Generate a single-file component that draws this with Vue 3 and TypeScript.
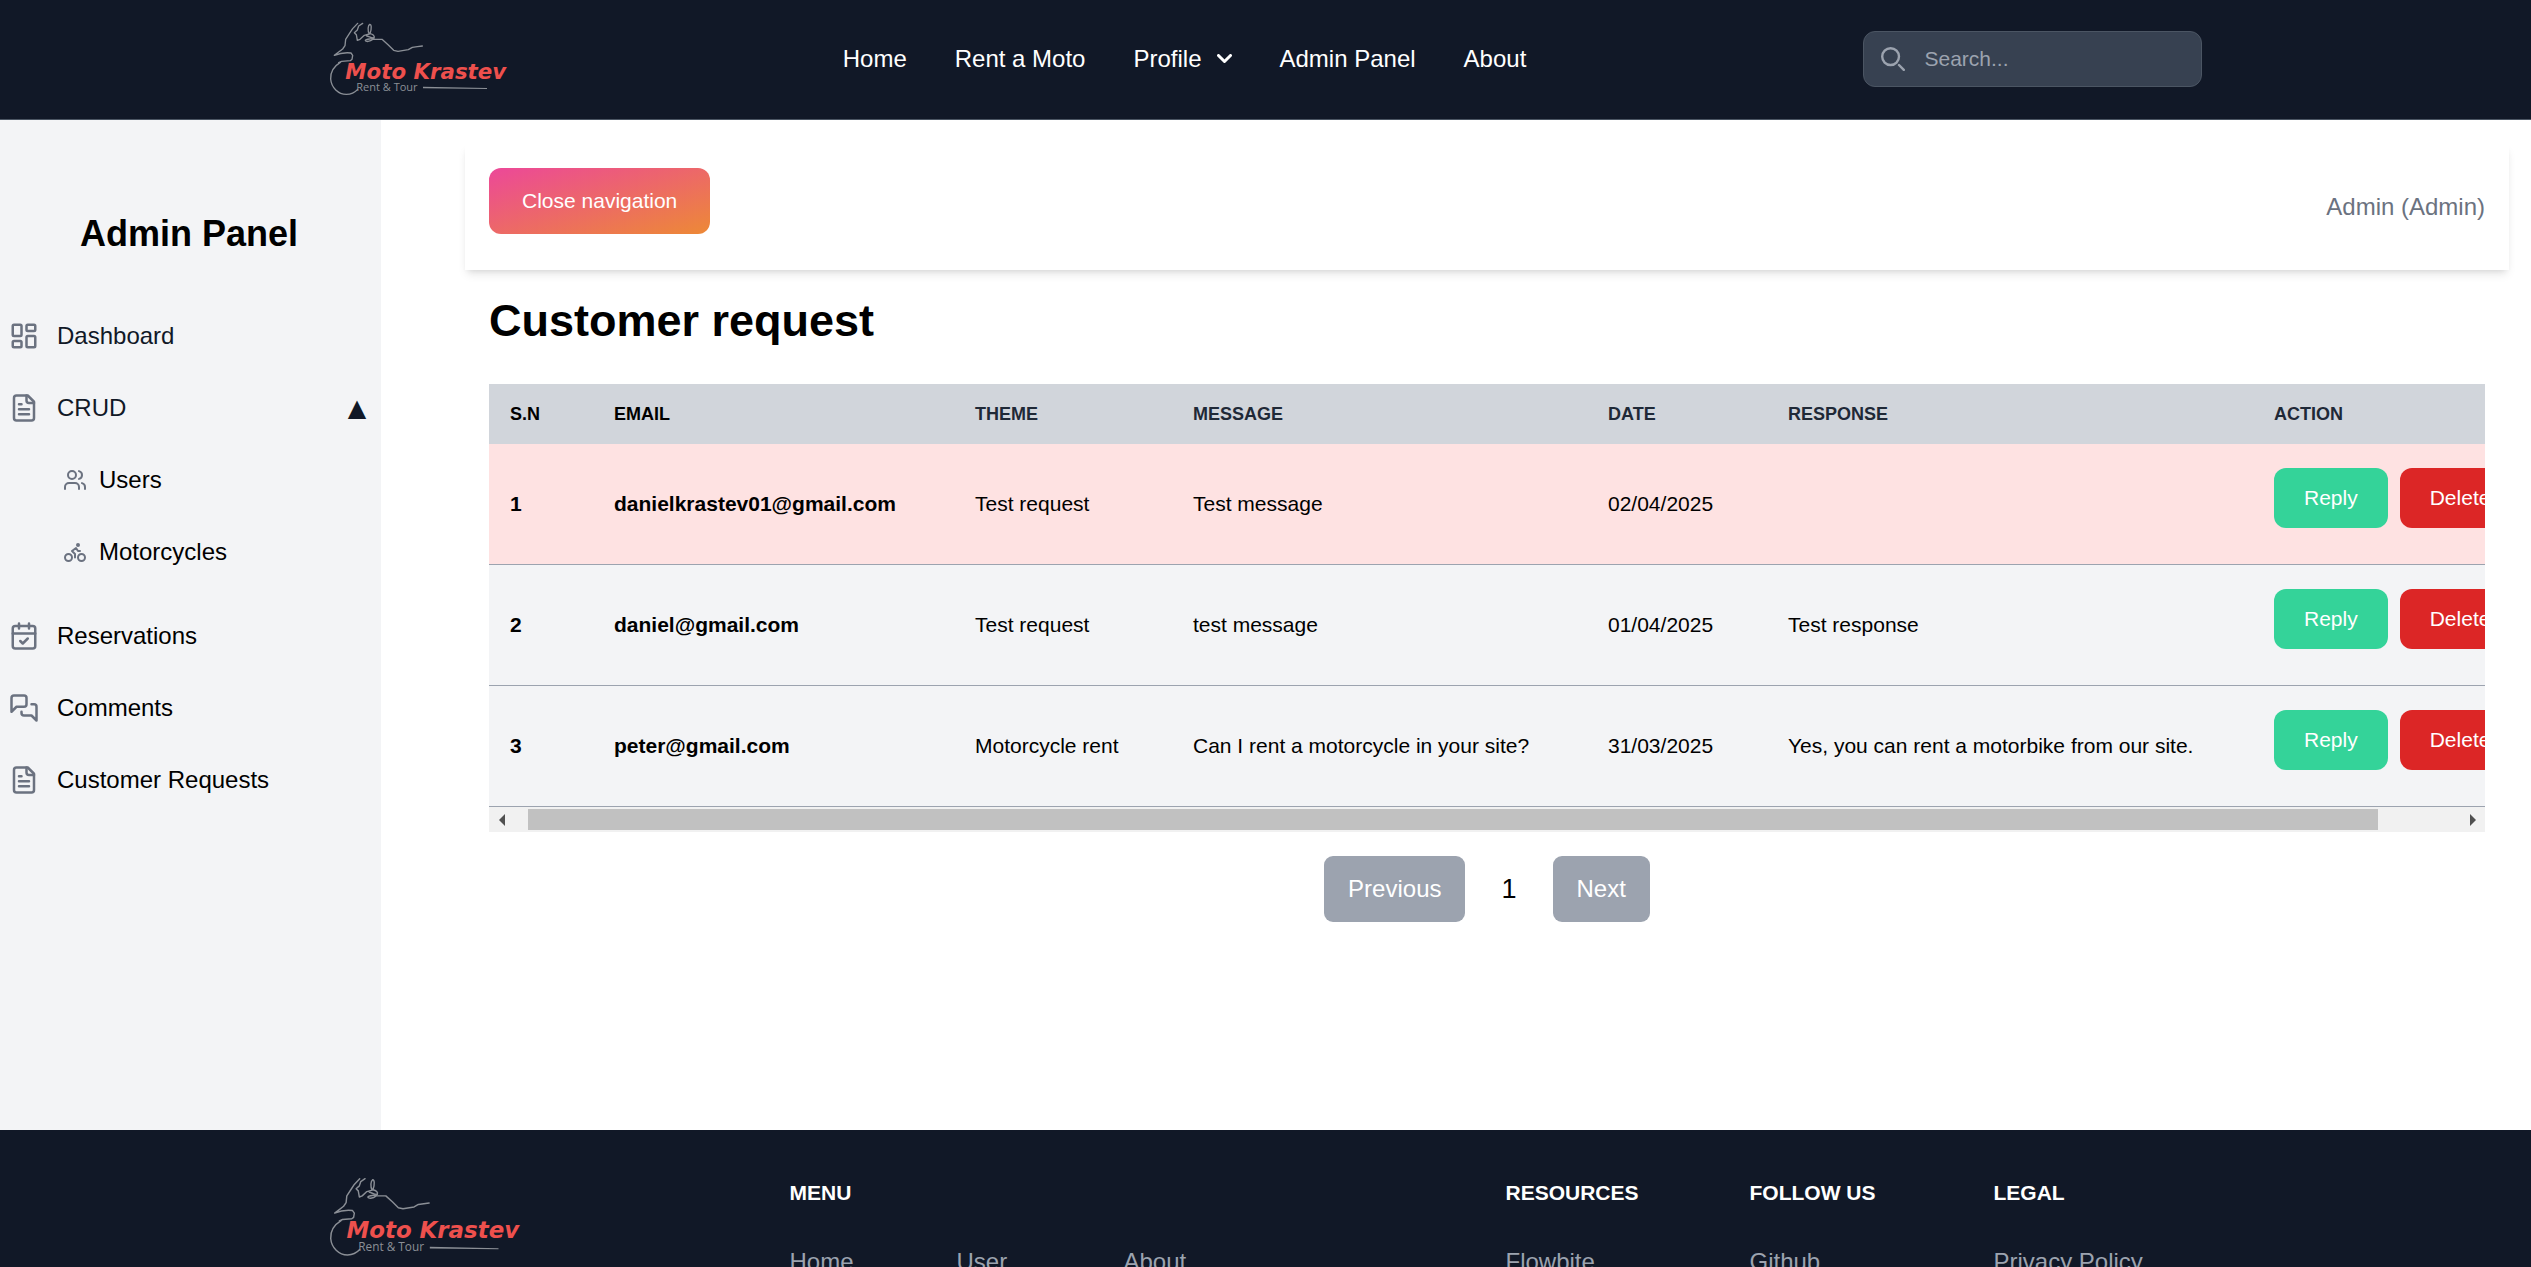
<script setup lang="ts">
import { onMounted, ref } from 'vue'

interface CustomerRequest {
  id: number
  email: string
  theme: string
  message: string
  date: string
  response: string
}

interface LinkGroup {
  title: string
  links: string[]
}

const requests: CustomerRequest[] = [
  { id: 1, email: 'danielkrastev01@gmail.com', theme: 'Test request', message: 'Test message', date: '02/04/2025', response: '' },
  { id: 2, email: 'daniel@gmail.com', theme: 'Test request', message: 'test message', date: '01/04/2025', response: 'Test response' },
  { id: 3, email: 'peter@gmail.com', theme: 'Motorcycle rent', message: 'Can I rent a motorcycle in your site?', date: '31/03/2025', response: 'Yes, you can rent a motorbike from our site.' },
]

const columns = ['S.N', 'Email', 'Theme', 'Message', 'Date', 'Response', 'Action']

const linkGroups: LinkGroup[] = [
  { title: 'Menu', links: ['Home', 'User', 'About'] },
  { title: 'Resources', links: ['Flowbite'] },
  { title: 'Follow us', links: ['Github'] },
  { title: 'Legal', links: ['Privacy Policy'] },
]

const search = ref('')
const crudOpen = ref(true)

// Horizontal scrolling of the table with its own scroll bar.
const STEP = 15
const scroller = ref<HTMLDivElement | null>(null)
const thumbLeft = ref(0)
const thumbWidth = ref(100)

function syncThumb(): void {
  const el = scroller.value
  if (!el) return
  thumbLeft.value = (el.scrollLeft / el.scrollWidth) * 100
  thumbWidth.value = (el.clientWidth / el.scrollWidth) * 100
}

function scrollTable(delta: number): void {
  if (!scroller.value) return
  scroller.value.scrollLeft += delta
  syncThumb()
}

onMounted(() => scrollTable(STEP))
</script>

<template>
  <div class="page">
    <svg class="defs" aria-hidden="true">
      <defs>
        <g id="brand-art">
          <g fill="none" stroke="#8b8f96" stroke-width="4" stroke-linejoin="round" stroke-linecap="round">
            <path d="M170 70L155 86L147 98L134 118L132 137L125 147L112 157L100 166Q125 156 150 159L155 166L153 178L148 182L122 184L113 188" />
            <path d="M118 187C98 199 88 216 89 237C91 263 112 283 136 283C149 283 162 277 170 268" />
            <path d="M185 70L173 78L169 90L160 98L166 104L169 121L177 118L190 106L205 102C199 92 201 76 206 73C211 72 213 84 207 101C216 103 222 108 219 114C210 115 203 108 197 108" />
            <path d="M219 114C210 118 195 116 193 121C193 126 207 126 216 118L243 118L262 135L278 151L291 154L322 149L334 142L349 140L364 138" />
          </g>
          <path d="M366 260L558 264L558 267L366 265Z" fill="#8b8f96" />
        </g>
      </defs>
    </svg>

    <header class="topbar">
      <div class="container topbar-inner">
        <a href="#" aria-label="Moto Krastev">
          <svg class="logo" viewBox="87 69 531 216">
            <use href="#brand-art" />
            <text x="133" y="237" class="brand-name">Moto Krastev</text>
            <text x="166" y="273" class="brand-sub">Rent &amp; Tour</text>
          </svg>
        </a>
        <nav class="main-nav">
          <a href="#">Home</a>
          <a href="#">Rent a Moto</a>
          <button type="button">
            Profile
            <svg class="chevron" viewBox="0 0 10 6" fill="none" stroke="currentColor" stroke-width="2" stroke-linecap="round" stroke-linejoin="round"><path d="m1 1 4 4 4-4" /></svg>
          </button>
          <a href="#">Admin Panel</a>
          <a href="#">About</a>
        </nav>
        <label class="search">
          <svg viewBox="0 0 20 20" fill="none" stroke="currentColor" stroke-width="2" stroke-linecap="round"><path d="m19 19-4-4m0-7A7 7 0 1 1 1 8a7 7 0 0 1 14 0Z" /></svg>
          <input v-model="search" type="text" placeholder="Search..." aria-label="Search" />
        </label>
      </div>
    </header>

    <div class="body">
      <aside class="sidebar">
        <h2>Admin Panel</h2>
        <ul>
          <li>
            <a href="#" class="item dark">
              <svg class="icon" viewBox="0 0 24 24"><rect x="3" y="3" width="7" height="9" rx="1" /><rect x="14" y="3" width="7" height="5" rx="1" /><rect x="14" y="12" width="7" height="9" rx="1" /><rect x="3" y="16" width="7" height="5" rx="1" /></svg>
              Dashboard
            </a>
          </li>
          <li>
            <button type="button" class="item dark" :aria-expanded="crudOpen" @click="crudOpen = !crudOpen">
              <svg class="icon" viewBox="0 0 24 24"><path d="M15 2H6a2 2 0 0 0-2 2v16a2 2 0 0 0 2 2h12a2 2 0 0 0 2-2V7Z" /><path d="M14 2v4a2 2 0 0 0 2 2h4M10 9H8M16 13H8M16 17H8" /></svg>
              CRUD
              <span class="caret">{{ crudOpen ? '▲' : '▼' }}</span>
            </button>
            <ul v-if="crudOpen" class="sub">
              <li>
                <a href="#" class="item">
                  <svg class="icon" viewBox="0 0 24 24"><path d="M16 21v-2a4 4 0 0 0-4-4H6a4 4 0 0 0-4 4v2" /><circle cx="9" cy="7" r="4" /><path d="M22 21v-2a4 4 0 0 0-3-3.87M16 3.13a4 4 0 0 1 0 7.75" /></svg>
                  Users
                </a>
              </li>
              <li>
                <a href="#" class="item">
                  <svg class="icon" viewBox="0 0 24 24"><circle cx="18.5" cy="17.5" r="3.5" /><circle cx="5.5" cy="17.5" r="3.5" /><circle cx="15" cy="5" r="1" /><path d="M12 17.5V14l-3-3 4-3 2 3h2" /></svg>
                  Motorcycles
                </a>
              </li>
            </ul>
          </li>
          <li>
            <a href="#" class="item">
              <svg class="icon" viewBox="0 0 24 24"><path d="M8 2v4M16 2v4" /><rect x="3" y="4" width="18" height="18" rx="2" /><path d="M3 10h18M9 16l2 2 4-4" /></svg>
              Reservations
            </a>
          </li>
          <li>
            <a href="#" class="item">
              <svg class="icon" viewBox="0 0 24 24"><path d="M14 9a2 2 0 0 1-2 2H6l-4 4V4a2 2 0 0 1 2-2h8a2 2 0 0 1 2 2z" /><path d="M18 9h2a2 2 0 0 1 2 2v11l-4-4h-6a2 2 0 0 1-2-2v-1" /></svg>
              Comments
            </a>
          </li>
          <li>
            <a href="#" class="item">
              <svg class="icon" viewBox="0 0 24 24"><path d="M15 2H6a2 2 0 0 0-2 2v16a2 2 0 0 0 2 2h12a2 2 0 0 0 2-2V7Z" /><path d="M14 2v4a2 2 0 0 0 2 2h4M10 9H8M16 13H8M16 17H8" /></svg>
              Customer Requests
            </a>
          </li>
        </ul>
      </aside>

      <main class="content">
        <div class="toolbar">
          <button type="button" class="close-nav">Close navigation</button>
          <span class="who">Admin (Admin)</span>
        </div>

        <section class="panel">
          <h1>Customer request</h1>
          <div ref="scroller" class="scroller" @scroll="syncThumb">
            <table>
              <colgroup>
                <col class="c-sn" /><col class="c-email" /><col class="c-theme" /><col class="c-message" /><col class="c-date" /><col class="c-response" /><col class="c-action" />
              </colgroup>
              <thead>
                <tr><th v-for="column in columns" :key="column" scope="col">{{ column }}</th></tr>
              </thead>
              <tbody>
                <tr v-for="request in requests" :key="request.id" :class="{ pending: !request.response }">
                  <th scope="row">{{ request.id }}</th>
                  <td class="strong">{{ request.email }}</td>
                  <td>{{ request.theme }}</td>
                  <td>{{ request.message }}</td>
                  <td>{{ request.date }}</td>
                  <td>{{ request.response }}</td>
                  <td>
                    <div class="actions">
                      <button type="button" class="reply">Reply</button>
                      <button type="button" class="delete">Delete</button>
                    </div>
                  </td>
                </tr>
              </tbody>
            </table>
          </div>
          <div class="scrollbar">
            <button type="button" aria-label="Scroll left" @click="scrollTable(-STEP)"><svg viewBox="0 0 6 12"><path d="M6 0v12L0 6z" /></svg></button>
            <div class="track"><div class="thumb" :style="{ marginLeft: thumbLeft + '%', width: thumbWidth + '%' }"></div></div>
            <button type="button" aria-label="Scroll right" @click="scrollTable(STEP)"><svg viewBox="0 0 6 12"><path d="M0 0v12l6-6z" /></svg></button>
          </div>

          <div class="pagination">
            <button type="button">Previous</button>
            <span>1</span>
            <button type="button">Next</button>
          </div>
        </section>
      </main>
    </div>

    <footer class="footer">
      <div class="container footer-inner">
        <a href="#" aria-label="Moto Krastev">
          <svg class="logo large" viewBox="87 69 531 216">
            <use href="#brand-art" />
            <text x="133" y="237" class="brand-name">Moto Krastev</text>
            <text x="166" y="273" class="brand-sub">Rent &amp; Tour</text>
          </svg>
        </a>
        <div class="groups">
          <div v-for="group in linkGroups" :key="group.title">
            <h2>{{ group.title }}</h2>
            <ul>
              <li v-for="link in group.links" :key="link"><a href="#">{{ link }}</a></li>
            </ul>
          </div>
        </div>
      </div>
    </footer>
  </div>
</template>

<style>
body {
  margin: 0;
}
</style>

<style scoped>
.page {
  height: 100vh;
  overflow: hidden;
  background: #fff;
  color: #000;
  font-family: "Liberation Sans", Arial, sans-serif;
  font-size: 24px;
  line-height: 36px;
}
.page * {
  box-sizing: border-box;
}
h1, h2, ul {
  margin: 0;
  padding: 0;
}
ul {
  list-style: none;
}
a {
  color: inherit;
  text-decoration: none;
}
button {
  margin: 0;
  padding: 0;
  border: 0;
  background: none;
  color: inherit;
  font: inherit;
  cursor: pointer;
}
.defs {
  position: absolute;
  width: 0;
  height: 0;
}
.brand-name {
  fill: #ee504d;
  font: italic 700 64px "DejaVu Sans", sans-serif;
}
.brand-sub {
  fill: #8b8f96;
  font: 400 33px "Open Sans", sans-serif;
}
.container {
  max-width: 1920px;
  margin: 0 auto;
  padding: 0 24px;
}

.topbar {
  border-bottom: 1px solid #4b5563;
  background: #111827;
  color: #fff;
}
.topbar-inner {
  display: flex;
  align-items: center;
  justify-content: space-between;
  min-height: 119px;
  padding-bottom: 2px;
}
.logo {
  display: block;
  overflow: visible;
  width: 177px;
  height: 72px;
}
.logo.large {
  width: 190px;
  height: 78px;
}
.main-nav {
  display: flex;
  align-items: center;
  gap: 48px;
}
.main-nav button {
  display: flex;
  align-items: center;
  gap: 15px;
}
.chevron {
  width: 15px;
  height: 9px;
}
.search {
  display: flex;
  align-items: center;
  gap: 20px;
  width: 339px;
  height: 56px;
  padding: 0 17px;
  border: 1px solid #4b5563;
  border-radius: 12px;
  background: #374151;
  color: #9ca3af;
}
.search svg {
  flex: none;
  width: 24px;
  height: 24px;
}
.search input {
  width: 100%;
  min-width: 0;
  padding: 0;
  border: 0;
  outline: 0;
  background: none;
  color: #fff;
  font: inherit;
  font-size: 21px;
}
.search input::placeholder {
  color: #9ca3af;
  opacity: 1;
}

.body {
  display: flex;
  min-height: 1010px;
}
.sidebar {
  flex: none;
  width: 381px;
  padding: 87px 3px 0 0;
  background: #f3f4f6;
}
.sidebar h2 {
  margin-bottom: 45px;
  font-size: 36px;
  line-height: 54px;
  text-align: center;
}
.sidebar ul {
  display: flex;
  flex-direction: column;
  gap: 12px;
}
.item {
  display: flex;
  align-items: center;
  gap: 18px;
  width: 100%;
  height: 60px;
  padding: 0 9px;
}
.dark {
  color: #111827;
}
.icon {
  flex: none;
  width: 30px;
  height: 30px;
  fill: none;
  stroke: #6b7280;
  stroke-width: 2;
  stroke-linecap: round;
  stroke-linejoin: round;
}
.caret {
  width: 24px;
  margin-left: auto;
  font-family: "DejaVu Sans", sans-serif;
  text-align: center;
}
.sidebar .sub {
  padding: 12px 0;
}
.sub .item {
  gap: 12px;
  padding-left: 63px;
}
.sub .icon {
  width: 24px;
  height: 24px;
}

.content {
  flex: 1;
  min-width: 0;
  padding: 24px 22px 0 84px;
}
.toolbar {
  display: flex;
  align-items: center;
  justify-content: space-between;
  padding: 24px;
  box-shadow: 0 6px 9px -2px rgba(0, 0, 0, 0.1), 0 3px 6px -3px rgba(0, 0, 0, 0.1);
}
.close-nav {
  margin-bottom: 12px;
  padding: 18px 33px;
  border-radius: 12px;
  background: linear-gradient(to bottom right, #ec4899, #ed8936);
  color: #fff;
  font-size: 21px;
  line-height: 30px;
}
.who {
  color: #6b7280;
}
.panel {
  padding: 24px;
}
h1 {
  margin-bottom: 36px;
  font-size: 45px;
  line-height: 54px;
}
.scroller {
  overflow-x: auto;
  scrollbar-width: none;
}
table {
  width: 100%;
  min-width: 2100px;
  border-collapse: separate;
  border-spacing: 0;
  table-layout: fixed;
  font-size: 21px;
  line-height: 30px;
  text-align: left;
}
.c-sn { width: 104px; }
.c-email { width: 361px; }
.c-theme { width: 218px; }
.c-message { width: 415px; }
.c-date { width: 180px; }
.c-response { width: 486px; }
.c-action { width: 336px; }
thead th {
  height: 60px;
  padding: 0 36px;
  background: #d1d5db;
  color: #1f2937;
  font-size: 18px;
  text-transform: uppercase;
}
thead th:nth-child(-n + 2) {
  color: #000;
}
tbody th,
tbody td {
  padding: 24px 36px;
  border-bottom: 1px solid #9ca3af;
  background: #f3f4f6;
  white-space: nowrap;
}
tbody .pending > * {
  background: #fee2e2;
}
.strong {
  font-weight: 700;
}
.actions {
  display: flex;
  gap: 12px;
  margin-bottom: 12px;
}
.actions button {
  padding: 15px 30px;
  border-radius: 12px;
  color: #fff;
}
.reply {
  background: #34d399;
}
.delete {
  background: #dc2626;
}
.scrollbar {
  display: flex;
  align-items: center;
  height: 25px;
  background: #f1f1f1;
}
.scrollbar button {
  display: flex;
  align-items: center;
  justify-content: center;
  width: 25px;
  height: 25px;
}
.scrollbar svg {
  width: 6px;
  height: 12px;
  fill: #505050;
}
.track {
  flex: 1;
}
.thumb {
  height: 21px;
  background: #c1c1c1;
}
.pagination {
  display: flex;
  align-items: center;
  justify-content: center;
  gap: 36px;
  margin-top: 24px;
}
.pagination button {
  padding: 15px 24px;
  border-radius: 9px;
  background: #9ca3af;
  color: #fff;
}
.pagination span {
  font-size: 27px;
}

.footer {
  background: #111827;
  color: #9ca3af;
}
.footer-inner {
  display: flex;
  justify-content: space-between;
  padding-top: 48px;
  padding-bottom: 48px;
}
.groups {
  display: grid;
  grid-template-columns: 680px repeat(3, 208px);
  gap: 36px;
}
.footer h2 {
  margin-bottom: 36px;
  color: #fff;
  font-size: 21px;
  line-height: 30px;
  text-transform: uppercase;
}
.footer ul {
  display: grid;
  grid-template-columns: repeat(auto-fill, 131px);
  gap: 36px;
}
.footer li {
  white-space: nowrap;
}
</style>
